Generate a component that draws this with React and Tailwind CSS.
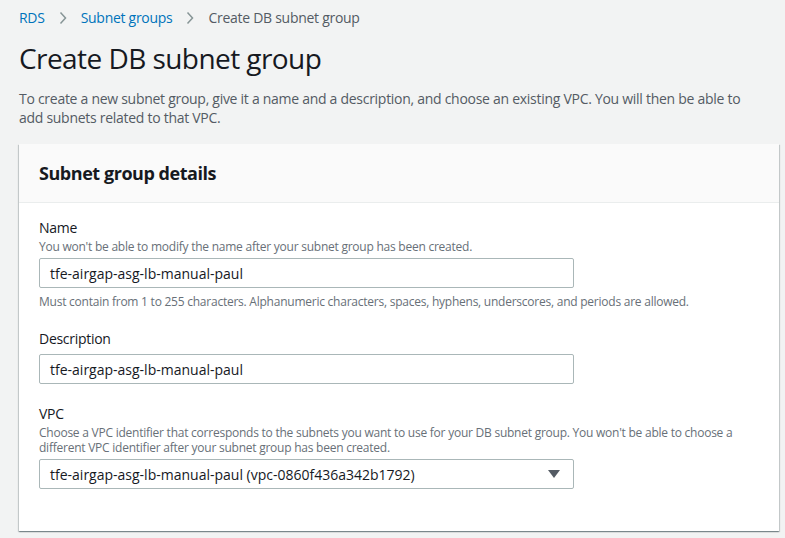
import React from "react";

const font = { fontFamily: '"Open Sans", "Noto Sans", Arial, sans-serif' };

function Field({ label, hint, children, after }) {
  return (
    <div className="flex flex-col">
      <div className="text-[14px] leading-[20px] text-[#16191f] tracking-[-0.02em]">{label}</div>
      {hint && <div className="text-[12px] leading-[15px] text-[#687078] mt-[1px] tracking-[-0.02em]">{hint}</div>}
      <div className={hint ? "mt-[4px]" : "mt-[5px]"}>{children}</div>
      {after && <div className="text-[12px] leading-[15px] text-[#687078] mt-[6px] tracking-[-0.02em]">{after}</div>}
    </div>
  );
}

function Input({ value }) {
  return (
    <div className="w-[535px] h-[30px] border border-[#aab7b8] rounded-[2px] bg-white flex items-center px-[10px] text-[14px] text-[#16191f]">
      {value}
    </div>
  );
}

function Chevron() {
  return (
    <svg className="mx-[14px]" width="8" height="14" viewBox="0 0 8 14">
      <path d="M1.5 1.5 L6.5 7 L1.5 12.5" fill="none" stroke="#879596" strokeWidth="1.5" />
    </svg>
  );
}

export default function App() {
  return (
    <div style={font} className="w-[785px] h-[538px] bg-[#f2f3f3] overflow-hidden px-[19px] pt-[8px]">
      <nav className="flex items-center text-[14px] leading-[20px] h-[20px] tracking-[-0.02em]">
        <span className="text-[#0073bb]">RDS</span>
        <Chevron />
        <span className="text-[#0073bb]">Subnet groups</span>
        <Chevron />
        <span className="text-[#545b64]">Create DB subnet group</span>
      </nav>
      <h1 className="mt-[12px] text-[28px] leading-[36px] text-[#16191f] font-normal tracking-[-0.02em]">Create DB subnet group</h1>
      <p className="mt-[13px] text-[14px] leading-[19px] text-[#545b64] tracking-[-0.02em]">
        To create a new subnet group, give it a name and a description, and choose an existing VPC. You will then be able to add subnets related to that VPC.
      </p>
      <div className="mt-[17px] bg-white w-[760px] shadow-[0_1px_1px_0_rgba(0,28,36,0.3),1px_1px_1px_0_rgba(0,28,36,0.15),-1px_1px_1px_0_rgba(0,28,36,0.15)]">
        <div className="bg-[#fafafa] border-b border-[#eaeded] h-[59px] flex items-center px-[20px]">
          <h2 className="text-[18px] font-bold text-[#16191f] tracking-[-0.025em]">Subnet group details</h2>
        </div>
        <div className="px-[20px] pt-[15px] pb-[42px] flex flex-col gap-[20px]">
          <Field
            label="Name"
            hint="You won't be able to modify the name after your subnet group has been created."
            after="Must contain from 1 to 255 characters. Alphanumeric characters, spaces, hyphens, underscores, and periods are allowed."
          >
            <Input value="tfe-airgap-asg-lb-manual-paul" />
          </Field>
          <Field label="Description">
            <Input value="tfe-airgap-asg-lb-manual-paul" />
          </Field>
          <Field
            label="VPC"
            hint="Choose a VPC identifier that corresponds to the subnets you want to use for your DB subnet group. You won't be able to choose a different VPC identifier after your subnet group has been created."
          >
            <div className="w-[535px] h-[30px] border border-[#aab7b8] rounded-[2px] bg-white flex items-center justify-between pl-[10px] pr-[13px] text-[14px] text-[#16191f]">
              <span>tfe-airgap-asg-lb-manual-paul (vpc-0860f436a342b1792)</span>
              <svg width="12" height="8" viewBox="0 0 12 8"><path d="M0 0 H12 L6 8 Z" fill="#545b64" /></svg>
            </div>
          </Field>
        </div>
      </div>
    </div>
  );
}
